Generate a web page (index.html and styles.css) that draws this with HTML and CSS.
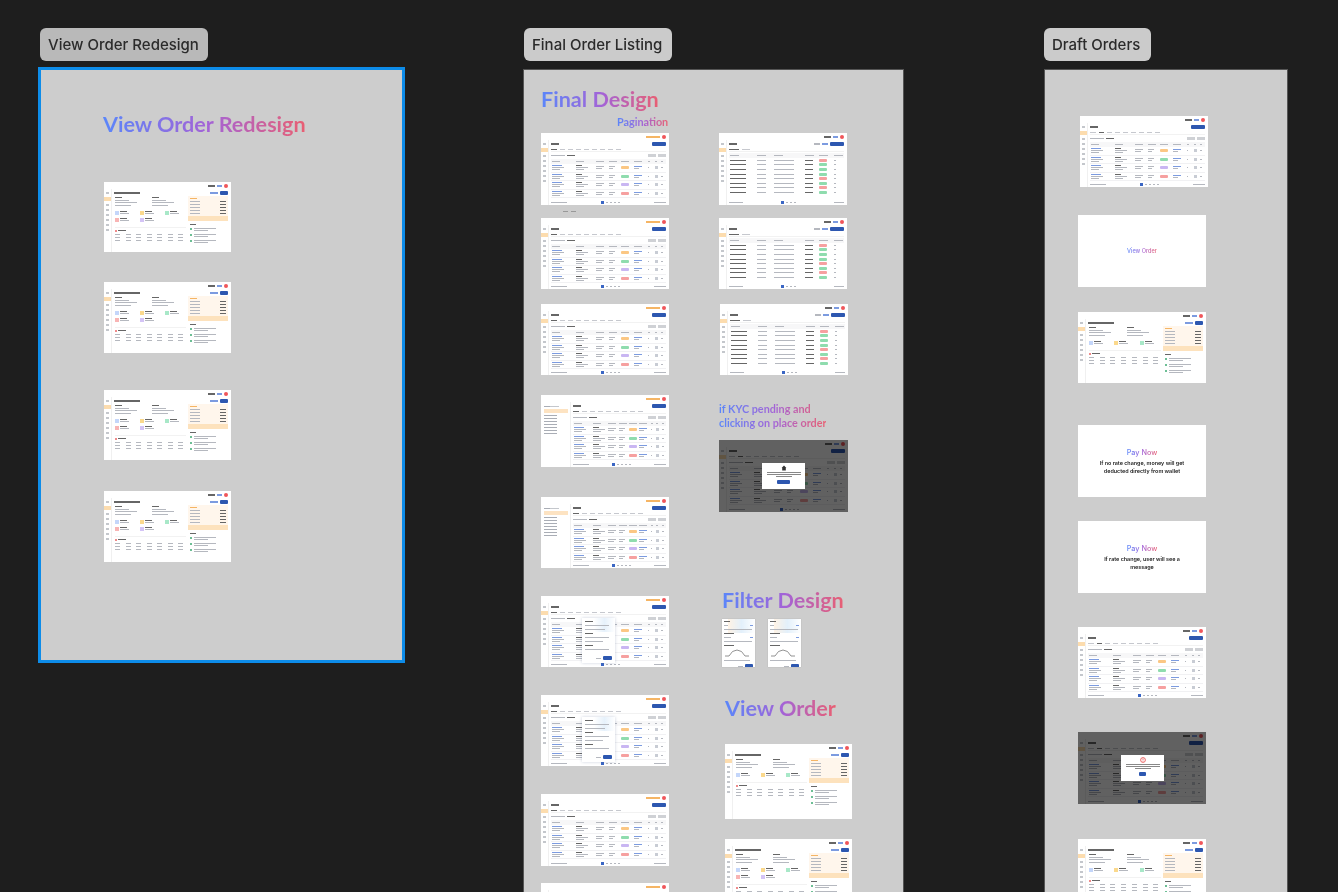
FILE: index.html
```html
<!DOCTYPE html>
<html lang="en">
<head>
<meta charset="utf-8">
<title>Order designs</title>
<link rel="stylesheet" href="styles.css">
</head>
<body>
<main class="canvas" id="canvas">
  <div class="label label-1">View Order Redesign</div>
  <div class="label label-2">Final Order Listing</div>
  <div class="label label-3">Draft Orders</div>

  <section class="frame frame-1"></section>
  <section class="frame frame-2"></section>
  <section class="frame frame-3"></section>

  <h2 class="grad title title-redesign">View Order Redesign</h2>
  <h2 class="grad title title-final">Final Design</h2>
  <h3 class="grad sub sub-page">Pagination</h3>
  <h3 class="grad sub sub-kyc">if KYC pending and<br>clicking on place order</h3>
  <h2 class="grad title title-filter">Filter Design</h2>
  <h2 class="grad title title-view">View Order</h2>

  <div class="note note-view"><b class="grad">View Order</b></div>
  <div class="note note-pay1"><b class="grad pay">Pay Now</b><p>If no rate change, money will get deducted directly from wallet</p></div>
  <div class="note note-pay2"><b class="grad pay">Pay Now</b><p>If rate change, user will see a message</p></div>

  <div class="stray stray-1"><i></i><i></i></div>
</main>
<script src="script.js"></script>
</body>
</html>
```

FILE: styles.css
```css
* { box-sizing: border-box; }
html, body { margin: 0; height: 100%; background: #1e1e1e; overflow: hidden; }
.canvas {
  position: relative; width: 1338px; height: 892px; overflow: hidden;
  background: #1e1e1e; font-family: Inter, "Liberation Sans", sans-serif;
  filter: blur(.55px);
}
.label {
  position: absolute; top: 28px; height: 33px; padding: 0 8px;
  display: flex; align-items: center; border-radius: 6px;
  font-size: 15px; font-weight: 500; color: #2b2b2b; white-space: nowrap; background: #cbcbcb;
}
.label-1 { left: 40px; width: 168px; background: #b9b9b9; }
.label-2 { left: 524px; width: 148px; }
.label-3 { left: 1044px; width: 107px; }

.frame { position: absolute; background: #cdcdcd; }
.frame-1 { left: 38px; top: 67px; width: 367px; height: 596px; border: 3px solid #0d8ce9; }
.frame-2 { left: 523px; top: 69px; width: 381px; height: 840px; border: 1px solid #555; border-bottom: 0; }
.frame-3 { left: 1044px; top: 69px; width: 244px; height: 840px; border: 1px solid #555; border-bottom: 0; }

.grad {
  background: linear-gradient(90deg, #5a86fa 0%, #a463d6 52%, #e95f72 100%);
  -webkit-background-clip: text; background-clip: text;
  color: transparent; -webkit-text-fill-color: transparent;
}
.title, .sub { position: absolute; margin: 0; font-family: Lato, "Open Sans", sans-serif; font-weight: 700; white-space: nowrap; }
.title { font-size: 21.6px; line-height: 28px; }
.title-redesign { left: 103px; top: 110px; }
.title-final { left: 541px; top: 85px; }
.title-filter { left: 722px; top: 586px; }
.title-view { left: 725px; top: 694px; }
.sub { font-size: 10.8px; line-height: 14px; }
.sub-page { left: 617px; top: 115px; }
.sub-kyc { left: 719px; top: 402px; }

.note {
  position: absolute; left: 1078px; width: 128px; height: 72px; background: #fff;
  display: flex; flex-direction: column; align-items: center; justify-content: center;
  font-family: Inter, sans-serif; text-align: center;
}
.note b { font-size: 5.6px; font-weight: 500; line-height: 9px; }
.note b.pay { font-size: 7.3px; line-height: 11px; }
.note p { margin: 2px 20px 0; font-size: 5.4px; line-height: 7.5px; font-weight: 600; color: #222; }
.note-view { top: 215px; }
.note-pay1 { top: 425px; }
.note-pay2 { top: 521px; }
.note-pay2 p { margin: 2px 24px 0; }

.stray { position: absolute; left: 563px; top: 211px; display: flex; gap: 3px; }
.stray i { display: block; width: 5px; height: 1px; background: #999; }

/* thumbnails */
.thumb { position: absolute; background: #fff; overflow: hidden; display: flex; flex-direction: column; filter: blur(.45px); }
.bar { display: block; height: 1px; flex: none; background: #b5b8bf; }
.bar.d { background: #666; }
.bar.l { background: #7c9be0; }
.bar.o { background: #f5b565; }
.t-top { height: 7px; flex: none; display: flex; align-items: center; justify-content: flex-end; gap: 2px; padding: 1px 3px 0 0; }
.t-top .bar { height: 1.5px; }
.dot { width: 4px; height: 4px; border-radius: 50%; background: #f0565a; flex: none; }
.t-body { flex: 1; display: flex; min-height: 0; }
.t-side { width: 8px; flex: none; display: flex; flex-direction: column; align-items: center; gap: 3px; padding-top: 3px; border-right: 1px solid #f0f0f0; }
.t-side u { display: block; width: 3px; height: 2px; background: #c4c7cc; }
.t-side u.on { width: 7px; height: 4px; background: #fcdcae; }
.t-side.wide { width: 30px; align-items: flex-start; padding: 4px 0 0 3px; gap: 2px; }
.t-side.wide u { width: 13px; height: 1px; background: #a9adb5; }
.t-side.wide u.on { width: 24px; height: 4px; background: #fde3c2; }
.t-side.wide u.sub { margin-left: 6px; width: 9px; background: #c4c7cc; }
.t-main { flex: 1; min-width: 0; display: flex; flex-direction: column; padding: 0 3px 0 2px; }
.t-head { display: flex; justify-content: space-between; align-items: center; height: 7px; flex: none; }
.t-head .bar { height: 2px; }
.btn { width: 14px; height: 4px; border-radius: 1px; background: #2d57b0; flex: none; display: block; }
.btn.small { width: 8px; }
.t-tabs { display: flex; gap: 3px; height: 5px; flex: none; align-items: center; border-bottom: 1px solid #f2f2f2; }
.t-tabs .bar { background: #c6c8ce; }
.t-tabs .bar.d { background: #666; }
.t-filters { display: flex; gap: 2px; height: 7px; flex: none; align-items: center; }
.t-filters .gap { flex: 1; }
.chip { display: block; width: 8px; height: 3px; background: #cfd1d5; flex: none; }
.t-thead { height: 5px; flex: none; background: #f7f7f8; padding: 0 1px; }
.t-thead.space { margin-top: 1px; }
.t-row { flex: none; height: 8.5px; border-bottom: 1px solid #f1f1f3; padding: 1px; }
.cols { display: grid; gap: 3px; align-items: center; grid-template-columns: 17fr 14fr 8fr 8fr 8fr 9fr 3fr 3fr 3fr; }
.cols.tbl { grid-template-columns: 15fr 9fr 18fr 7fr 7fr 6fr; }
.cell { display: flex; flex-direction: column; gap: 1px; min-width: 0; }
.pill { display: block; height: 3px; border-radius: 1px; width: 8px; }
.pill.orange { background: #fbc784; }
.pill.green { background: #8fdcae; }
.pill.purple { background: #c9b6f2; }
.pill.red { background: #f6a0a0; }
.sq { display: block; width: 3px; height: 3px; background: #c8ccd4; }
.t-row.s { height: 4.6px; padding: 0 1px; border-bottom: 0; }
.t-pager { margin-top: auto; height: 5px; flex: none; display: flex; align-items: center; justify-content: space-between; }
.pg { display: flex; gap: 2px; align-items: center; }
.pg em { display: block; width: 3px; height: 3px; background: #3a66c4; }

/* dark modal state */
.shade { position: absolute; inset: 0; background: rgba(0,0,0,.62); }
.modal {
  position: absolute; left: 43px; top: 23px; width: 43px; height: 26px; background: #fff;
  display: flex; flex-direction: column; align-items: center; padding-top: 2px; gap: 1px;
}
.modal .ic { width: 6px; height: 6px; flex: none; }
.modal .bar { background: #888; }
.modal .btn { margin-top: 2px; width: 13px; height: 3.5px; }
.modal.m-r .btn { width: 7px; }

/* filter popup on list */
.popup {
  position: absolute; left: 41px; top: 22px; width: 33px; height: 45px; background: #fff;
  box-shadow: 0 0 3px rgba(80,100,140,.3); display: flex; flex-direction: column; gap: 3px; padding: 3px;
}
.popup-grad { position: absolute; left: 12px; top: 0; right: 0; height: 14px; background: linear-gradient(90deg, #fff, #e6f1fb, #fff); }
.popup .bar { position: relative; }
.popup .foot { margin-top: auto; display: flex; justify-content: flex-end; gap: 2px; align-items: center; }
.popup .foot .btn { width: 9px; height: 4px; }

/* filter panel thumb */
.fthumb { padding: 2px; gap: 3px; box-shadow: 0 0 1px rgba(0,0,0,.2); }
.fthumb .tint { position: absolute; left: 6px; right: 0; top: 0; height: 14px; background: linear-gradient(90deg, #fff3e5, #e3f0fb, #fff); }
.fthumb .bar { position: relative; }
.fthumb .row { position: relative; display: flex; justify-content: space-between; }
.fthumb svg { position: relative; width: 26px; height: 8px; display: block; flex: none; }
.fthumb .foot { margin-top: auto; display: flex; justify-content: flex-end; align-items: center; gap: 2px; position: relative; }
.fthumb .foot .btn { width: 8px; height: 4px; }

/* order detail thumb */
.v-grid { flex: 1; display: grid; grid-template-columns: 1fr 40px; min-height: 0; gap: 1px; }
.v-left { display: flex; flex-direction: column; gap: 3px; min-width: 0; padding: 1px; }
.v-addr { display: grid; grid-template-columns: 1fr 1fr; gap: 3px; flex: none; }
.v-addr .cell { gap: 1.5px; }
.v-chips { display: grid; grid-template-columns: repeat(3, 1fr); gap: 3px 4px; flex: none; padding: 2px 0; }
.v-chip { display: flex; gap: 1px; align-items: center; }
.v-chip u { display: block; width: 4px; height: 4px; flex: none; }
.v-chip .cell { flex: 1; }
.v-tbl { flex: none; display: flex; flex-direction: column; gap: 2px; border-top: 1px solid #f2f2f2; padding-top: 2px; }
.v-tbl .hd { display: flex; gap: 1px; align-items: center; }
.v-tbl .hd u { width: 2px; height: 2px; background: #f08a8a; display: block; }
.v-tbl .line { display: grid; grid-template-columns: repeat(7, 1fr); gap: 3px; }
.v-right { display: flex; flex-direction: column; min-width: 0; }
.v-sum { background: #fff6ec; padding: 2px; display: flex; flex-direction: column; gap: 2px; flex: none; }
.v-sum .line { display: flex; justify-content: space-between; }
.v-total { background: #fde2bd; height: 5px; flex: none; }
.v-steps { padding: 3px 2px; display: flex; flex-direction: column; gap: 3px; }
.v-steps .st { display: flex; gap: 2px; align-items: flex-start; }
.v-steps .st u { display: block; width: 2px; height: 2px; background: #6dbf95; flex: none; }
.v-steps .st .cell { flex: 1; }
```

FILE: script.js
```js
// Greeked miniature screens on the design canvas, generated from a small data table.
(function () {
const bar = (w, c = '') => `<span class="bar ${c}" style="width:${w}px"></span>`;
const cell = (...b) => `<div class="cell">${b.join('')}</div>`;
const seq = (n, f) => Array.from({ length: n }, (_, i) => f(i)).join('');
const topStrip = (promo) => `<div class="t-top">${promo ? bar(14, 'o') : bar(7, 'd') + bar(5, 'l')}<i class="dot"></i></div>`;

function side(wide) {
  if (wide) {
    return `<div class="t-side wide"><u></u><u class="on"></u><u class="sub"></u><u class="sub"></u>${seq(7, () => '<u></u>')}</div>`;
  }
  return `<div class="t-side"><u></u><u class="on"></u>${seq(6, () => '<u></u>')}</div>`;
}

function listBody(opts) {
  const pills = ['orange', 'green', 'purple', 'red'];
  const tabs = seq(9, (i) => bar(i === 0 ? 6 : 5, i === (opts.tab || 0) ? 'd' : ''));
  const head = `<div class="cols t-thead">${seq(9, (i) => cell(bar(i < 6 ? 8 : 2)))}</div>`;
  const rows = seq(4, (i) => `<div class="cols t-row">
    ${cell(bar(10, 'l'), bar(12), bar(8))}${cell(bar(6, 'd'), bar(12), bar(8))}${cell(bar(8), bar(6))}${cell(bar(6), bar(4))}
    <div class="cell"><span class="pill ${pills[i]}"></span></div>${cell(bar(8, 'l'), bar(5))}
    ${cell(bar(1))}<div class="cell"><span class="sq"></span></div>${cell(bar(2))}</div>`);
  return `<div class="t-main">
    <div class="t-head">${bar(8, 'd')}<span class="btn"></span></div>
    <div class="t-tabs">${tabs}</div>
    <div class="t-filters">${bar(14)}${bar(8, 'd')}<span class="gap"></span><span class="chip"></span><span class="chip"></span></div>
    ${head}${rows}
    <div class="t-pager">${bar(16)}<span class="pg"><em></em>${bar(2)}${bar(2)}${bar(2)}${bar(2)}</span>${bar(12)}</div>
  </div>`;
}

function listThumb(opts) {
  let extra = '';
  if (opts.popup) {
    extra = `<div class="popup"><div class="popup-grad"></div>${bar(8, 'd')}${bar(24)}${bar(20)}${bar(8, 'd')}${bar(24)}${bar(18)}${bar(8, 'd')}${bar(24)}
      <div class="foot">${bar(5)}<span class="btn"></span></div></div>`;
  }
  if (opts.modal) {
    const ic = opts.modal === 'red'
      ? '<svg class="ic" viewBox="0 0 10 10"><circle cx="5" cy="5" r="4" fill="none" stroke="#e8504f" stroke-width="1.4"/><path d="M5 2.6v3.2M5 6.8v.8" stroke="#e8504f" stroke-width="1.2"/></svg>'
      : '<svg class="ic" viewBox="0 0 10 10"><path d="M5 1 9 5H8v4H2V5H1z" fill="#333"/></svg>';
    extra = `<div class="shade"></div><div class="modal ${opts.modal === 'red' ? 'm-r' : ''}">${ic}${bar(34)}${bar(34)}${bar(16)}<span class="btn"></span></div>`;
  }
  return `${topStrip(opts.promo)}<div class="t-body">${side(opts.wide)}${listBody(opts)}</div>${extra}`;
}

function tableThumb() {
  const pills = ['red', 'green', 'green', 'green', 'red', 'green', 'red', 'green'];
  const rows = seq(8, (i) => `<div class="cols tbl t-row s">${cell(bar(16, 'd'))}${cell(bar(9))}${cell(bar(20))}${cell(bar(8, 'd'))}
    <div class="cell"><span class="pill ${pills[i]}"></span></div>${cell(bar(2))}</div>`);
  return `${topStrip(false)}<div class="t-body">${side(false)}<div class="t-main">
    <div class="t-head">${bar(8, 'd')}<span class="pg">${bar(6)}${bar(6, 'l')}<span class="btn"></span></span></div>
    <div class="t-tabs">${bar(10, 'd')}${bar(8)}</div>
    <div class="cols tbl t-thead space">${seq(6, () => cell(bar(9)))}</div>
    ${rows}
    <div class="t-pager">${bar(14)}<span class="pg"><em></em>${bar(2)}${bar(2)}${bar(2)}</span>${bar(10)}</div>
  </div></div>`;
}

function viewThumb(chips) {
  const colors = ['#c4d6fa', '#fbd98d', '#a8e8c8', '#f8b4b4', '#d4c4f6'];
  const chipHtml = seq(chips, (i) => `<div class="v-chip"><u style="background:${colors[i % 5]}"></u>${cell(bar(7, 'd'), bar(9))}</div>`);
  const addr = cell(bar(7, 'd'), bar(14), bar(22), bar(16));
  const tbl = seq(3, () => `<div class="line">${seq(7, () => bar(5))}</div>`);
  return `${topStrip(false)}<div class="t-body">${side(false)}<div class="t-main">
    <div class="t-head">${bar(26, 'd')}<span class="pg">${bar(8, 'l')}<span class="btn small"></span></span></div>
    <div class="v-grid">
      <div class="v-left">
        <div class="v-addr">${addr}${addr}</div>
        <div class="v-chips">${chipHtml}</div>
        <div class="v-tbl"><div class="hd"><u></u>${bar(8, 'd')}</div>${tbl}</div>
      </div>
      <div class="v-right">
        <div class="v-sum">${bar(7, 'o')}${seq(5, () => `<div class="line">${bar(10)}${bar(6, 'd')}</div>`)}</div>
        <div class="v-total"></div>
        <div class="v-steps">${bar(6, 'd')}${seq(3, () => `<div class="st"><u></u>${cell(bar(22), bar(14))}</div>`)}</div>
      </div>
    </div>
  </div></div>`;
}

function filterThumb() {
  return `<div class="tint"></div>${bar(6, 'd')}<div class="row">${bar(4)}${bar(3, 'l')}</div>${bar(28)}
    ${bar(10, 'd')}<div class="row">${bar(7)}${bar(3, 'l')}</div>${bar(28)}${bar(10, 'd')}
    <svg viewBox="0 0 26 8"><path d="M1 7H5Q8 1 13 1T21 7H25" fill="none" stroke="#777" stroke-width=".8"/></svg>
    ${bar(26)}<div class="foot">${bar(5)}<span class="btn"></span></div>`;
}

const items = [
  [104, 182, 127, 70, 'view', 5], [104, 282, 127, 71, 'view', 5], [104, 390, 127, 70, 'view', 5], [104, 491, 127, 71, 'view', 5],
  [541, 133, 128, 72, 'list', { promo: 1 }], [541, 218, 128, 71, 'list', { promo: 1 }], [541, 304, 128, 71, 'list', { promo: 1 }],
  [541, 395, 128, 72, 'list', { promo: 1, wide: 1 }], [541, 497, 128, 71, 'list', { promo: 1, wide: 1 }],
  [541, 596, 128, 71, 'list', { promo: 1, popup: 1 }], [541, 695, 128, 71, 'list', { promo: 1, popup: 1 }],
  [541, 794, 128, 72, 'list', { promo: 1 }], [541, 883, 128, 71, 'list', { promo: 1 }],
  [719, 133, 128, 72, 'table'], [719, 218, 128, 71, 'table'], [720, 304, 128, 71, 'table'],
  [719, 440, 129, 72, 'list', { modal: 'kyc', tab: 1 }],
  [722, 619, 33, 48, 'filter'], [768, 619, 33, 48, 'filter'],
  [725, 744, 127, 75, 'view', 3], [725, 839, 127, 75, 'view', 5],
  [1080, 116, 128, 71, 'list', { tab: 1 }], [1078, 312, 128, 71, 'view', 3], [1078, 627, 128, 71, 'list', { tab: 1 }],
  [1078, 732, 128, 72, 'list', { modal: 'red', tab: 1 }], [1078, 839, 128, 72, 'view', 3],
];

const canvas = document.getElementById('canvas');
for (const [x, y, w, h, type, opt] of items) {
  const el = document.createElement('div');
  el.className = type === 'filter' ? 'thumb fthumb' : 'thumb';
  el.style.cssText = `left:${x}px;top:${y}px;width:${w}px;height:${h}px`;
  el.innerHTML = type === 'list' ? listThumb(opt)
    : type === 'table' ? tableThumb()
    : type === 'view' ? viewThumb(opt)
    : filterThumb();
  canvas.appendChild(el);
}
})();
```
